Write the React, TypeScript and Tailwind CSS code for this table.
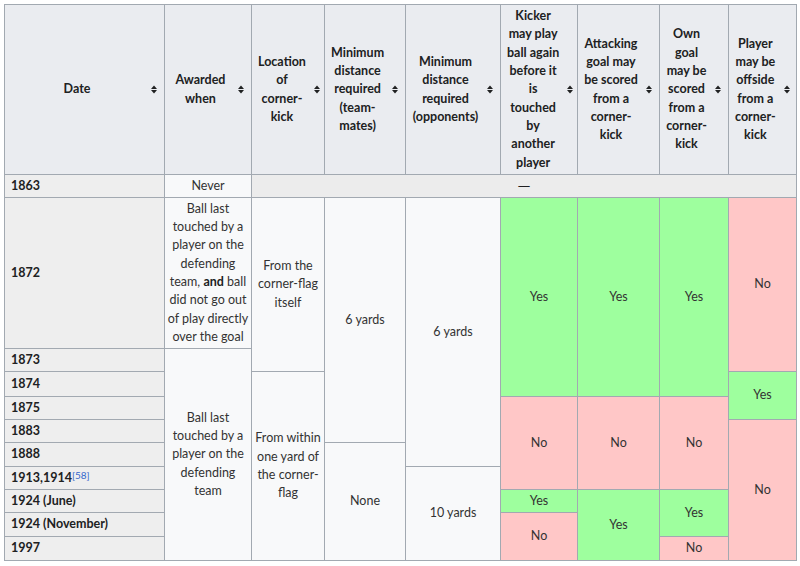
import * as React from "react";

const YES = "bg-[#9eff9e]";
const NO = "bg-[#ffc7c7]";
const BODY = "bg-[#f8f9fa]";

function SortIcon() {
  return (
    <svg width="6" height="9" viewBox="0 0 6 9" className="shrink-0">
      <path d="M0 4 L3 0.5 L6 4 Z" fill="#202122" />
      <path d="M0 5 L3 8.5 L6 5 Z" fill="#202122" />
    </svg>
  );
}

function Lines({ lines }: { lines: React.ReactNode[] }) {
  return (
    <>
      {lines.map((l, i) => (
        <span key={i} className="block whitespace-nowrap">
          {l}
        </span>
      ))}
    </>
  );
}

const headers: { cls: string; lines: string[] }[] = [
  { cls: "col-start-1", lines: ["Date"] },
  { cls: "col-start-2", lines: ["Awarded", "when"] },
  { cls: "col-start-3", lines: ["Location", "of", "corner-", "kick"] },
  { cls: "col-start-4", lines: ["Minimum", "distance", "required", "(team-", "mates)"] },
  { cls: "col-start-5", lines: ["Minimum", "distance", "required", "(opponents)"] },
  {
    cls: "col-start-6",
    lines: ["Kicker", "may play", "ball again", "before it", "is", "touched", "by", "another", "player"],
  },
  { cls: "col-start-7", lines: ["Attacking", "goal may", "be scored", "from a", "corner-", "kick"] },
  { cls: "col-start-8", lines: ["Own", "goal", "may be", "scored", "from a", "corner-", "kick"] },
  { cls: "col-start-9", lines: ["Player", "may be", "offside", "from a", "corner-", "kick"] },
];

const dates: { cls: string; label: React.ReactNode }[] = [
  { cls: "row-start-2", label: "1863" },
  { cls: "row-start-3", label: "1872" },
  { cls: "row-start-4", label: "1873" },
  { cls: "row-start-5", label: "1874" },
  { cls: "row-start-6", label: "1875" },
  { cls: "row-start-7", label: "1883" },
  { cls: "row-start-8", label: "1888" },
  {
    cls: "row-start-9",
    label: (
      <>
        1913,1914
        <sup className="relative -top-[3px] text-[10px] font-normal text-[#3366cc]">[58]</sup>
      </>
    ),
  },
  { cls: "row-start-10", label: "1924 (June)" },
  { cls: "row-start-11", label: "1924 (November)" },
  { cls: "row-start-12", label: "1997" },
];

const cells: { cls: string; lines: React.ReactNode[] }[] = [
  { cls: `col-start-2 row-start-2 ${BODY}`, lines: ["Never"] },
  {
    cls: "col-start-3 col-span-7 row-start-2 bg-[#ececec]",
    lines: [<span className="font-['DejaVu_Sans',sans-serif] text-[#202122]">—</span>],
  },
  {
    cls: `col-start-2 row-start-3 ${BODY}`,
    lines: [
      "Ball last",
      "touched by a",
      "player on the",
      "defending",
      <>
        team, <b className="text-[#202122]">and</b> ball
      </>,
      "did not go out",
      "of play directly",
      "over the goal",
    ],
  },
  {
    cls: `col-start-2 row-start-4 row-span-9 ${BODY}`,
    lines: ["Ball last", "touched by a", "player on the", "defending", "team"],
  },
  { cls: `col-start-3 row-start-3 row-span-2 ${BODY}`, lines: ["From the", "corner-flag", "itself"] },
  {
    cls: `col-start-3 row-start-5 row-span-8 ${BODY}`,
    lines: ["From within", "one yard of", "the corner-", "flag"],
  },
  { cls: `col-start-4 row-start-3 row-span-5 ${BODY}`, lines: ["6 yards"] },
  { cls: `col-start-4 row-start-8 row-span-5 ${BODY}`, lines: ["None"] },
  { cls: `col-start-5 row-start-3 row-span-6 ${BODY}`, lines: ["6 yards"] },
  { cls: `col-start-5 row-start-9 row-span-4 ${BODY}`, lines: ["10 yards"] },
  // kicker
  { cls: `col-start-6 row-start-3 row-span-3 ${YES}`, lines: ["Yes"] },
  { cls: `col-start-6 row-start-6 row-span-4 ${NO}`, lines: ["No"] },
  { cls: `col-start-6 row-start-10 ${YES}`, lines: ["Yes"] },
  { cls: `col-start-6 row-start-11 row-span-2 ${NO}`, lines: ["No"] },
  // attacking goal
  { cls: `col-start-7 row-start-3 row-span-3 ${YES}`, lines: ["Yes"] },
  { cls: `col-start-7 row-start-6 row-span-4 ${NO}`, lines: ["No"] },
  { cls: `col-start-7 row-start-10 row-span-3 ${YES}`, lines: ["Yes"] },
  // own goal
  { cls: `col-start-8 row-start-3 row-span-3 ${YES}`, lines: ["Yes"] },
  { cls: `col-start-8 row-start-6 row-span-4 ${NO}`, lines: ["No"] },
  { cls: `col-start-8 row-start-10 row-span-2 ${YES}`, lines: ["Yes"] },
  { cls: `col-start-8 row-start-12 ${NO}`, lines: ["No"] },
  // offside
  { cls: `col-start-9 row-start-3 row-span-2 ${NO}`, lines: ["No"] },
  { cls: `col-start-9 row-start-5 row-span-2 ${YES}`, lines: ["Yes"] },
  { cls: `col-start-9 row-start-7 row-span-6 ${NO}`, lines: ["No"] },
];

export default function App() {
  return (
    <div className="min-h-screen bg-white pl-[4px] pt-[4px] font-['Lato','Liberation_Sans',sans-serif] text-[12.5px] leading-[18.3px] text-[#333]">
      <div className="grid w-max gap-px bg-[#a2a9b1] p-px grid-cols-[159px_86px_72px_80px_94px_76px_81px_68px_67px] grid-rows-[169px_22px_150px_22px_24px_22px_22px_23px_22px_22px_23px_23px]">
        {headers.map((h, i) => (
          <div
            key={i}
            className={`${h.cls} row-start-1 flex items-center gap-[8px] bg-[#eaecf0] pl-[6px] pr-[7px] font-bold text-[#202122]`}
          >
            <div className="flex-1 text-center">
              <Lines lines={h.lines} />
            </div>
            <SortIcon />
          </div>
        ))}
        {dates.map((d, i) => (
          <div
            key={i}
            className={`${d.cls} col-start-1 flex items-center bg-[#eeeeee] px-[6px] font-bold text-[#202122] whitespace-nowrap`}
          >
            <span>{d.label}</span>
          </div>
        ))}
        {cells.map((c, i) => (
          <div key={i} className={`${c.cls} flex items-center justify-center px-[5px] text-center`}>
            <div>
              <Lines lines={c.lines} />
            </div>
          </div>
        ))}
      </div>
    </div>
  );
}
